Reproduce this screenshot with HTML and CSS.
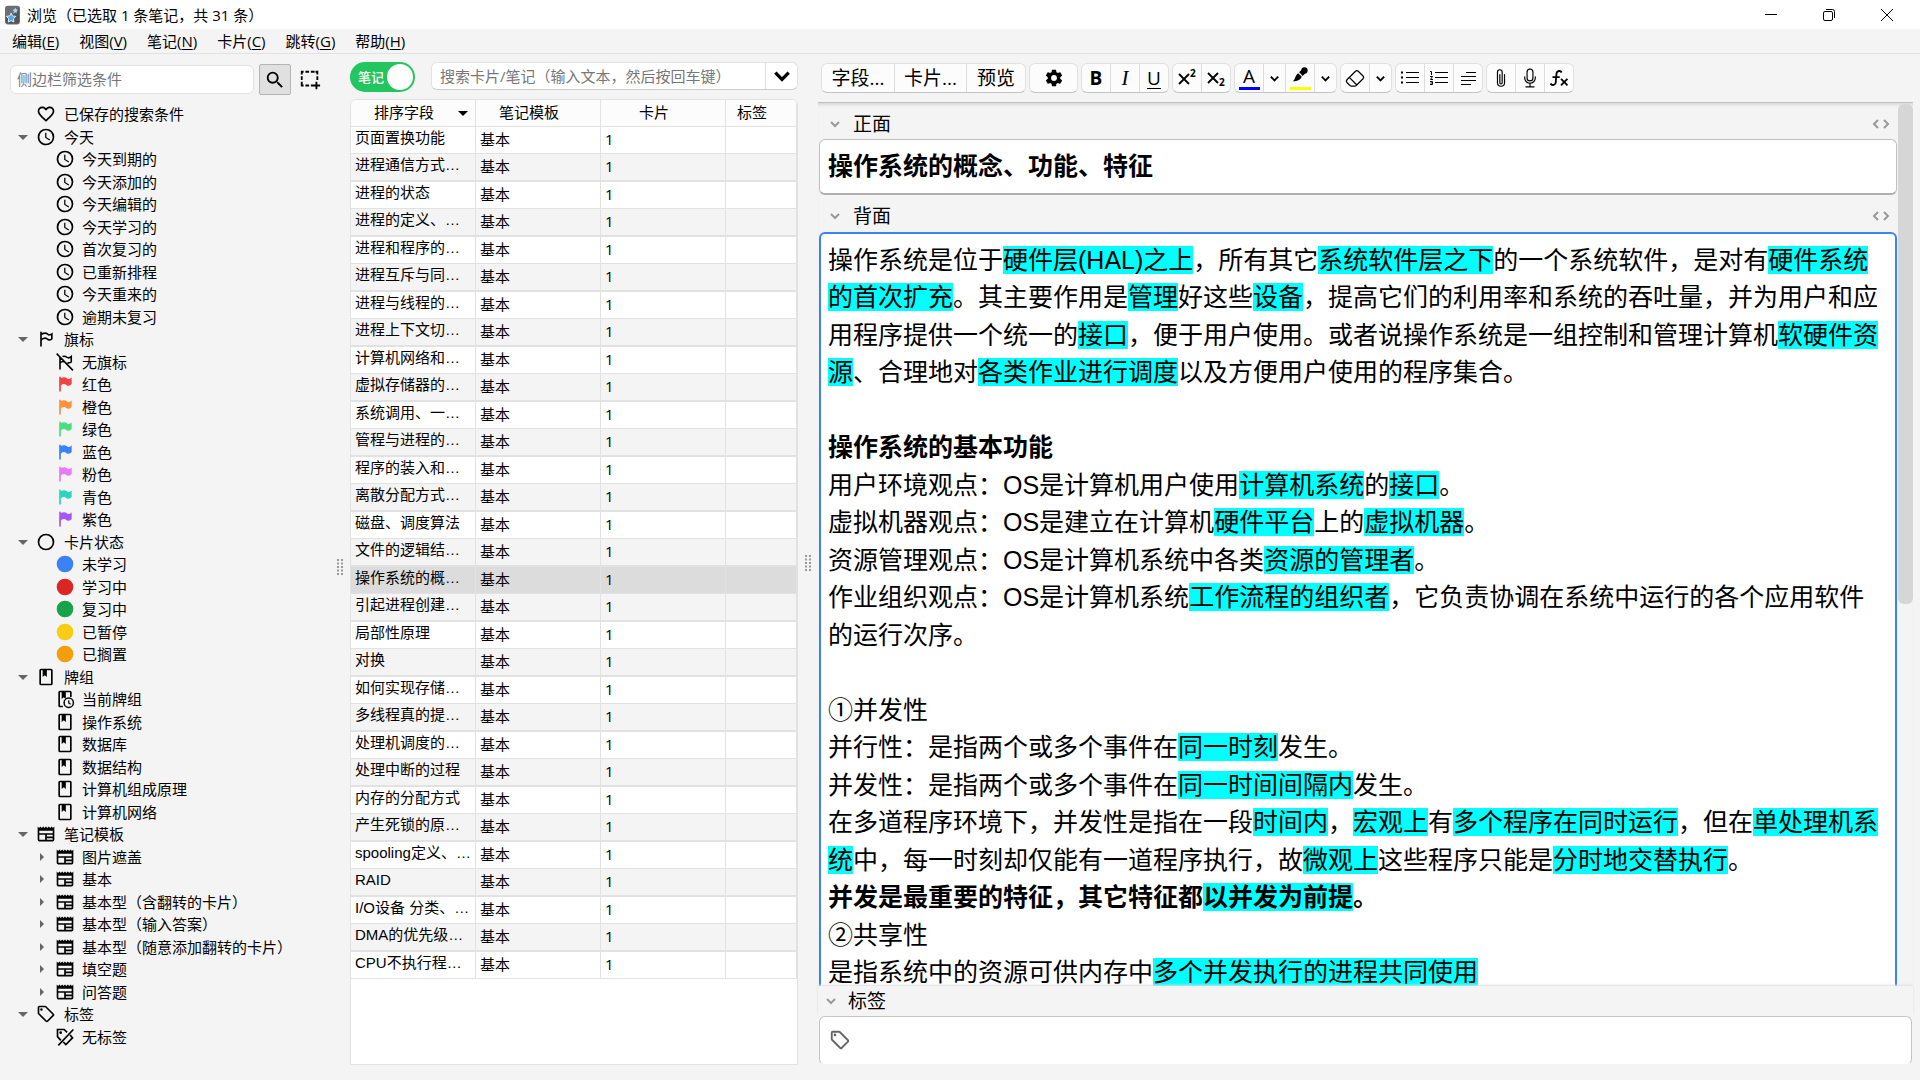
FILE: index.html
```html
<!DOCTYPE html>
<html lang="zh-CN">
<head>
<meta charset="utf-8">
<title>浏览</title>
<link rel="stylesheet" href="styles.css">
</head>
<body>
<svg class="sprite" aria-hidden="true">
  <symbol id="search" viewBox="0 0 24 24"><path d="M9.5,3A6.5,6.5 0 0,1 16,9.5C16,11.11 15.41,12.59 14.44,13.73L14.71,14H15.5L20.5,19L19,20.5L14,15.5V14.71L13.73,14.44C12.59,15.41 11.11,16 9.5,16A6.5,6.5 0 0,1 3,9.5A6.5,6.5 0 0,1 9.5,3M9.5,5C7,5 5,7 5,9.5C5,12 7,14 9.5,14C12,14 14,12 14,9.5C14,7 12,5 9.5,5Z"/></symbol>
  <symbol id="select" viewBox="0 0 24 24"><path d="M2,2H5V4H4V6H2V2M7,2H11V4H7V2M13,2H17V4H13V2M18,2H21V6H19V4H18V2M2,8H4V12H2V8M19,8H21V12H19V8M2,14H4V17H5V19H2V14M7,17H11V19H7V17M13,17H15V19H13V17M18,14H20V17H23V19H20V22H18V19H15V17H18V14Z"/></symbol>
  <symbol id="heart" viewBox="0 0 24 24"><path d="M12.1,18.55L12,18.65L11.89,18.55C7.14,14.24 4,11.39 4,8.5C4,6.5 5.5,5 7.5,5C9.04,5 10.54,6 11.07,7.36H12.93C13.46,6 14.96,5 16.5,5C18.5,5 20,6.5 20,8.5C20,11.39 16.86,14.24 12.1,18.55M16.5,3C14.76,3 13.09,3.81 12,5.08C10.91,3.81 9.24,3 7.5,3C4.42,3 2,5.41 2,8.5C2,12.27 5.4,15.36 10.55,20.03L12,21.35L13.45,20.03C18.6,15.36 22,12.27 22,8.5C22,5.41 19.58,3 16.5,3Z"/></symbol>
  <symbol id="clock" viewBox="0 0 24 24"><path d="M12,20A8,8 0 0,0 20,12A8,8 0 0,0 12,4A8,8 0 0,0 4,12A8,8 0 0,0 12,20M12,2A10,10 0 0,1 22,12A10,10 0 0,1 12,22C6.47,22 2,17.5 2,12A10,10 0 0,1 12,2M12.5,7V12.25L17,14.92L16.25,16.15L11,13V7H12.5Z"/></symbol>
  <symbol id="flag" viewBox="0 0 24 24"><path d="M6,3A1,1 0 0,1 7,4V4.88C8.06,4.44 9.5,4 11,4C14,4 14,6 16,6C19,6 20,4 20,4V12C20,12 19,14 16,14C13,14 13,12 11,12C8,12 7,14 7,14V21H5V4A1,1 0 0,1 6,3Z"/></symbol>
  <symbol id="flag-line" viewBox="0 0 24 24"><path d="M6,3A1,1 0 0,1 7,4V4.88C8.06,4.44 9.5,4 11,4C14,4 14,6 16,6C19,6 20,4 20,4V12C20,12 19,14 16,14C13,14 13,12 11,12C8,12 7,14 7,14V21H5V4A1,1 0 0,1 6,3M7,7.25V11.5C7,11.5 9,10 11,10C13,10 14,12 16,12C18,12 18,11 18,11V7.5C18,7.5 17,8 16,8C14,8 13,6 11,6C9,6 7,7.25 7,7.25Z"/></symbol>
  <symbol id="flag-off" viewBox="0 0 24 24"><path d="M6,6V21M6,13C8,11 10,11 12,12M9,5.500C13,4 14,7 16,7C18,7 19,6 19.500,5.500V12C18,13.500 16,13 15,13M2,2L21.500,22" fill="none" stroke="currentColor" stroke-width="1.900"/></symbol>
  <symbol id="ring" viewBox="0 0 24 24"><circle cx="12" cy="12" r="9" fill="none" stroke="currentColor" stroke-width="2"/></symbol>
  <symbol id="dot" viewBox="0 0 24 24"><circle cx="12" cy="12" r="10"/></symbol>
  <symbol id="book" viewBox="0 0 24 24"><path d="M18,2A2,2 0 0,1 20,4V20A2,2 0 0,1 18,22H6A2,2 0 0,1 4,20V4A2,2 0 0,1 6,2H18M18,4H13V12L10.500,9.750L8,12V4H6V20H18V4Z"/></symbol>
  <symbol id="book-clock" viewBox="0 0 24 24"><path d="M18,2A2,2 0 0,1 20,4V9.500H18V4H13V12L10.500,9.750L8,12V4H6V20H9.500V22H6A2,2 0 0,1 4,20V4A2,2 0 0,1 6,2H18Z"/><circle cx="16.500" cy="16.500" r="5.600" fill="none" stroke="currentColor" stroke-width="1.800"/><path d="M16.500,13.500V16.800L18.800,18.200" fill="none" stroke="currentColor" stroke-width="1.500"/></symbol>
  <symbol id="news" viewBox="0 0 24 24"><path d="M20,11H4V8H20M20,15H13V13H20M20,19H13V17H20M11,19H4V13H11M20.330,4.670L18.670,3L17,4.670L15.330,3L13.670,4.670L12,3L10.330,4.670L8.670,3L7,4.670L5.330,3L3.670,4.670L2,3V19A2,2 0 0,0 4,21H20A2,2 0 0,0 22,19V3L20.330,4.670Z"/></symbol>
  <symbol id="tag" viewBox="0 0 24 24"><path d="M21.410,11.580L12.410,2.580C12.040,2.210 11.530,2 11,2H4A2,2 0 0,0 2,4V11C2,11.530 2.210,12.040 2.590,12.410L11.590,21.410C11.960,21.780 12.470,22 13,22C13.530,22 14.040,21.790 14.410,21.410L21.410,14.410C21.790,14.040 22,13.530 22,13C22,12.470 21.790,11.960 21.410,11.580M13,20L4,11V4H11L20,13M6.500,5A1.500,1.500 0 0,1 8,6.500A1.500,1.500 0 0,1 6.500,8A1.500,1.500 0 0,1 5,6.500A1.500,1.500 0 0,1 6.500,5Z"/></symbol>
  <symbol id="tag-off" viewBox="0 0 24 24"><path d="M7,16L3,11.500V3H11L14.500,6.500M18,9.500L21,13L13,21L10,18M22,3L4,22" fill="none" stroke="currentColor" stroke-width="2"/><circle cx="6.800" cy="6.800" r="1.600"/></symbol>
  <symbol id="cog" viewBox="0 0 24 24"><path d="M12,15.5A3.5,3.5 0 0,1 8.5,12A3.5,3.5 0 0,1 12,8.5A3.5,3.5 0 0,1 15.5,12A3.5,3.5 0 0,1 12,15.5M19.43,12.97C19.47,12.65 19.5,12.33 19.5,12C19.5,11.67 19.47,11.34 19.43,11L21.54,9.37C21.73,9.22 21.78,8.95 21.66,8.73L19.66,5.27C19.54,5.05 19.27,4.96 19.05,5.05L16.56,6.05C16.04,5.66 15.5,5.32 14.87,5.07L14.5,2.42C14.46,2.18 14.25,2 14,2H10C9.75,2 9.54,2.18 9.5,2.42L9.13,5.07C8.5,5.32 7.96,5.66 7.44,6.05L4.95,5.05C4.73,4.96 4.46,5.05 4.34,5.27L2.34,8.73C2.21,8.95 2.27,9.22 2.46,9.37L4.57,11C4.53,11.34 4.5,11.67 4.5,12C4.5,12.33 4.53,12.65 4.57,12.97L2.46,14.63C2.27,14.78 2.21,15.05 2.34,15.27L4.34,18.73C4.46,18.95 4.73,19.03 4.95,18.95L7.44,17.94C7.96,18.34 8.5,18.68 9.13,18.93L9.5,21.58C9.54,21.82 9.75,22 10,22H14C14.25,22 14.46,21.82 14.5,21.58L14.87,18.93C15.5,18.67 16.04,18.34 16.56,17.94L19.05,18.95C19.27,19.03 19.54,18.95 19.66,18.73L21.66,15.27C21.78,15.05 21.73,14.78 21.54,14.63L19.43,12.97Z"/></symbol>
  <symbol id="chevron" viewBox="0 0 12 12"><path d="M2,4L6,8L10,4" fill="none" stroke="currentColor" stroke-width="2"/></symbol>
  <symbol id="code" viewBox="0 0 18 12"><path d="M6,2L2,6L6,10M12,2L16,6L12,10" fill="none" stroke="currentColor" stroke-width="2"/></symbol>
  <symbol id="open" viewBox="0 0 10 10"><path d="M0,3H10L5,8Z"/></symbol>
  <symbol id="closed" viewBox="0 0 10 10"><path d="M3,1V9L7,5Z"/></symbol>
  <symbol id="grip" viewBox="0 0 6 16"><path d="M0,0h2v2h-2zM4,0h2v2h-2zM0,3.500h2v2h-2zM4,3.500h2v2h-2zM0,7h2v2h-2zM4,7h2v2h-2zM0,10.500h2v2h-2zM4,10.500h2v2h-2zM0,14h2v2h-2zM4,14h2v2h-2z"/></symbol>
</svg>

<header class="titlebar">
  <svg class="app-icon" viewBox="0 0 16 20"><rect x="0" y="0" width="16" height="20" rx="3" fill="#6f6f6f"/><path d="M1,11C7,12 12,8 15,2V17Q15,19 13,19H3Q1,19 1,17Z" fill="#555"/><path d="M6.500,8L8,11L11.500,11.500L9,14L9.500,17.500L6.500,16L3.500,17.500L4,14L1.500,11.500L5,11Z" fill="#4aa8ee" stroke="#e4f3ff" stroke-width="1"/><path d="M11,2L12,4L14,4.500L12.500,6L12.500,8L11,7L9,8L9.500,6L8,4.500L10,4Z" fill="#a9d6f7"/></svg>
  <h1 class="title">浏览（已选取 1 条笔记，共 31 条）</h1>
  <div class="window-buttons">
    <button aria-label="最小化"><svg viewBox="0 0 14 14"><path d="M1,6.500H13"/></svg></button>
    <button aria-label="还原"><svg viewBox="0 0 14 14"><rect x="1.500" y="3.500" width="9" height="9" rx="1.500"/><path d="M4,1.500H10.500Q12.500,1.500 12.500,3.500V10"/></svg></button>
    <button aria-label="关闭"><svg viewBox="0 0 14 14"><path d="M1,1L13,13M13,1L1,13"/></svg></button>
  </div>
</header>

<nav class="menubar">
  <button>编辑(<u>E</u>)</button>
  <button>视图(<u>V</u>)</button>
  <button>笔记(<u>N</u>)</button>
  <button>卡片(<u>C</u>)</button>
  <button>跳转(<u>G</u>)</button>
  <button>帮助(<u>H</u>)</button>
</nav>

<main class="browser">
  <aside class="sidebar">
    <div class="sidebar-tools">
      <input class="filter" type="text" placeholder="侧边栏筛选条件" aria-label="侧边栏筛选条件">
      <button class="tool active" aria-label="搜索"><svg><use href="#search"/></svg></button>
      <button class="tool" aria-label="选择"><svg><use href="#select"/></svg></button>
    </div>
    <ul class="tree">
      <li><i class="arrow"></i><svg><use href="#heart"/></svg>已保存的搜索条件</li>
      <li><svg class="arrow"><use href="#open"/></svg><svg><use href="#clock"/></svg>今天</li>
      <li class="child"><i class="arrow"></i><svg><use href="#clock"/></svg>今天到期的</li>
      <li class="child"><i class="arrow"></i><svg><use href="#clock"/></svg>今天添加的</li>
      <li class="child"><i class="arrow"></i><svg><use href="#clock"/></svg>今天编辑的</li>
      <li class="child"><i class="arrow"></i><svg><use href="#clock"/></svg>今天学习的</li>
      <li class="child"><i class="arrow"></i><svg><use href="#clock"/></svg>首次复习的</li>
      <li class="child"><i class="arrow"></i><svg><use href="#clock"/></svg>已重新排程</li>
      <li class="child"><i class="arrow"></i><svg><use href="#clock"/></svg>今天重来的</li>
      <li class="child"><i class="arrow"></i><svg><use href="#clock"/></svg>逾期未复习</li>
      <li><svg class="arrow"><use href="#open"/></svg><svg><use href="#flag-line"/></svg>旗标</li>
      <li class="child"><i class="arrow"></i><svg><use href="#flag-off"/></svg>无旗标</li>
      <li class="child"><i class="arrow"></i><svg class="red"><use href="#flag"/></svg>红色</li>
      <li class="child"><i class="arrow"></i><svg class="orange"><use href="#flag"/></svg>橙色</li>
      <li class="child"><i class="arrow"></i><svg class="green"><use href="#flag"/></svg>绿色</li>
      <li class="child"><i class="arrow"></i><svg class="blue"><use href="#flag"/></svg>蓝色</li>
      <li class="child"><i class="arrow"></i><svg class="pink"><use href="#flag"/></svg>粉色</li>
      <li class="child"><i class="arrow"></i><svg class="teal"><use href="#flag"/></svg>青色</li>
      <li class="child"><i class="arrow"></i><svg class="purple"><use href="#flag"/></svg>紫色</li>
      <li><svg class="arrow"><use href="#open"/></svg><svg><use href="#ring"/></svg>卡片状态</li>
      <li class="child"><i class="arrow"></i><svg class="blue"><use href="#dot"/></svg>未学习</li>
      <li class="child"><i class="arrow"></i><svg class="learn"><use href="#dot"/></svg>学习中</li>
      <li class="child"><i class="arrow"></i><svg class="review"><use href="#dot"/></svg>复习中</li>
      <li class="child"><i class="arrow"></i><svg class="suspended"><use href="#dot"/></svg>已暂停</li>
      <li class="child"><i class="arrow"></i><svg class="buried"><use href="#dot"/></svg>已搁置</li>
      <li><svg class="arrow"><use href="#open"/></svg><svg><use href="#book"/></svg>牌组</li>
      <li class="child"><i class="arrow"></i><svg><use href="#book-clock"/></svg>当前牌组</li>
      <li class="child"><i class="arrow"></i><svg><use href="#book"/></svg>操作系统</li>
      <li class="child"><i class="arrow"></i><svg><use href="#book"/></svg>数据库</li>
      <li class="child"><i class="arrow"></i><svg><use href="#book"/></svg>数据结构</li>
      <li class="child"><i class="arrow"></i><svg><use href="#book"/></svg>计算机组成原理</li>
      <li class="child"><i class="arrow"></i><svg><use href="#book"/></svg>计算机网络</li>
      <li><svg class="arrow"><use href="#open"/></svg><svg><use href="#news"/></svg>笔记模板</li>
      <li class="child"><svg class="arrow"><use href="#closed"/></svg><svg><use href="#news"/></svg>图片遮盖</li>
      <li class="child"><svg class="arrow"><use href="#closed"/></svg><svg><use href="#news"/></svg>基本</li>
      <li class="child"><svg class="arrow"><use href="#closed"/></svg><svg><use href="#news"/></svg>基本型（含翻转的卡片）</li>
      <li class="child"><svg class="arrow"><use href="#closed"/></svg><svg><use href="#news"/></svg>基本型（输入答案）</li>
      <li class="child"><svg class="arrow"><use href="#closed"/></svg><svg><use href="#news"/></svg>基本型（随意添加翻转的卡片）</li>
      <li class="child"><svg class="arrow"><use href="#closed"/></svg><svg><use href="#news"/></svg>填空题</li>
      <li class="child"><svg class="arrow"><use href="#closed"/></svg><svg><use href="#news"/></svg>问答题</li>
      <li><svg class="arrow"><use href="#open"/></svg><svg><use href="#tag"/></svg>标签</li>
      <li class="child"><i class="arrow"></i><svg><use href="#tag-off"/></svg>无标签</li>
    </ul>
  </aside>

  <div class="splitter"><svg><use href="#grip"/></svg></div>

  <section class="list">
    <div class="list-tools">
      <label class="switch"><input type="checkbox" checked><span>笔记</span></label>
      <div class="search">
        <input type="text" placeholder="搜索卡片/笔记（输入文本，然后按回车键）" aria-label="搜索卡片/笔记">
        <button aria-label="搜索历史"><svg><use href="#chevron"/></svg></button>
      </div>
    </div>
    <div class="table-box">
      <table>
        <colgroup><col class="wide"><col class="wide"><col class="wide"><col></colgroup>
        <thead><tr><th class="sorted">排序字段<svg><use href="#open"/></svg></th><th>笔记模板</th><th>卡片</th><th>标签</th></tr></thead>
        <tbody>
          <tr><td>页面置换功能</td><td>基本</td><td>1</td><td></td></tr>
          <tr><td>进程通信方式…</td><td>基本</td><td>1</td><td></td></tr>
          <tr><td>进程的状态</td><td>基本</td><td>1</td><td></td></tr>
          <tr><td>进程的定义、…</td><td>基本</td><td>1</td><td></td></tr>
          <tr><td>进程和程序的…</td><td>基本</td><td>1</td><td></td></tr>
          <tr><td>进程互斥与同…</td><td>基本</td><td>1</td><td></td></tr>
          <tr><td>进程与线程的…</td><td>基本</td><td>1</td><td></td></tr>
          <tr><td>进程上下文切…</td><td>基本</td><td>1</td><td></td></tr>
          <tr><td>计算机网络和…</td><td>基本</td><td>1</td><td></td></tr>
          <tr><td>虚拟存储器的…</td><td>基本</td><td>1</td><td></td></tr>
          <tr><td>系统调用、一…</td><td>基本</td><td>1</td><td></td></tr>
          <tr><td>管程与进程的…</td><td>基本</td><td>1</td><td></td></tr>
          <tr><td>程序的装入和…</td><td>基本</td><td>1</td><td></td></tr>
          <tr><td>离散分配方式…</td><td>基本</td><td>1</td><td></td></tr>
          <tr><td>磁盘、调度算法</td><td>基本</td><td>1</td><td></td></tr>
          <tr><td>文件的逻辑结…</td><td>基本</td><td>1</td><td></td></tr>
          <tr class="selected"><td>操作系统的概…</td><td>基本</td><td>1</td><td></td></tr>
          <tr><td>引起进程创建…</td><td>基本</td><td>1</td><td></td></tr>
          <tr><td>局部性原理</td><td>基本</td><td>1</td><td></td></tr>
          <tr><td>对换</td><td>基本</td><td>1</td><td></td></tr>
          <tr><td>如何实现存储…</td><td>基本</td><td>1</td><td></td></tr>
          <tr><td>多线程真的提…</td><td>基本</td><td>1</td><td></td></tr>
          <tr><td>处理机调度的…</td><td>基本</td><td>1</td><td></td></tr>
          <tr><td>处理中断的过程</td><td>基本</td><td>1</td><td></td></tr>
          <tr><td>内存的分配方式</td><td>基本</td><td>1</td><td></td></tr>
          <tr><td>产生死锁的原…</td><td>基本</td><td>1</td><td></td></tr>
          <tr><td>spooling定义、…</td><td>基本</td><td>1</td><td></td></tr>
          <tr><td>RAID</td><td>基本</td><td>1</td><td></td></tr>
          <tr><td>I/O设备 分类、…</td><td>基本</td><td>1</td><td></td></tr>
          <tr><td>DMA的优先级…</td><td>基本</td><td>1</td><td></td></tr>
          <tr><td>CPU不执行程…</td><td>基本</td><td>1</td><td></td></tr>
        </tbody>
      </table>
    </div>
  </section>

  <div class="splitter second"><svg><use href="#grip"/></svg></div>

  <section class="editor">
    <div class="toolbar">
      <div class="group text"><button>字段...</button><button>卡片...</button><button>预览</button></div>
      <div class="group single"><button aria-label="选项"><svg><use href="#cog"/></svg></button></div>
      <div class="group">
        <button class="bold">B</button><button class="italic">I</button><button class="underline">U</button>
      </div>
      <div class="group">
        <button aria-label="上标"><svg viewBox="0 0 20 20"><path class="line bolder" d="M2,6L12,16M12,6L2,16"/><text x="13" y="9">2</text></svg></button>
        <button aria-label="下标"><svg viewBox="0 0 20 20"><path class="line bolder" d="M2,5L12,15M12,5L2,15"/><text x="13" y="18">2</text></svg></button>
      </div>
      <div class="group">
        <button class="swatch text-color">A</button>
        <button class="drop" aria-label="文字颜色"><svg><use href="#chevron"/></svg></button>
        <button class="swatch mark-color" aria-label="突出显示"><svg viewBox="0 0 20 20"><path d="M2,17C5,15 4,11 8,8L12,12C10,16 7,17 2,17ZM9,7L12,4L16,8L13,11Z"/><circle cx="15" cy="5" r="3.500"/></svg></button>
        <button class="drop" aria-label="突出显示颜色"><svg><use href="#chevron"/></svg></button>
      </div>
      <div class="group">
        <button aria-label="清除格式"><svg viewBox="0 0 16 16"><path d="M8.086 2.207a2 2 0 0 1 2.828 0l3.879 3.879a2 2 0 0 1 0 2.828l-5.5 5.5A2 2 0 0 1 7.879 15H5.12a2 2 0 0 1-1.414-.586l-2.5-2.5a2 2 0 0 1 0-2.828l6.879-6.879zm2.121.707a1 1 0 0 0-1.414 0L4.16 7.547l5.293 5.293 4.633-4.633a1 1 0 0 0 0-1.414l-3.879-3.879zM8.746 13.547 3.453 8.254 1.914 9.793a1 1 0 0 0 0 1.414l2.5 2.5a1 1 0 0 0 .707.293H7.88a1 1 0 0 0 .707-.293l.16-.16z"/></svg></button>
        <button class="drop" aria-label="清除选项"><svg><use href="#chevron"/></svg></button>
      </div>
      <div class="group">
        <button aria-label="无序列表"><svg viewBox="0 0 20 20"><path class="line" d="M6,4.500H19M6,9.500H19M6,14.500H19"/><path d="M1,3.500h2v2h-2zM1,8.500h2v2h-2zM1,13.500h2v2h-2z"/></svg></button>
        <button aria-label="有序列表"><svg viewBox="0 0 20 20"><path class="line" d="M6,4.500H19M6,9.500H19M6,14.500H19"/><path class="line thin" d="M1,3.500H2.500V7M1,8.500H3.500L1.500,11.500H4M1,13.500H3.500V16.500H1M1.500,15H3.500"/></svg></button>
        <button aria-label="对齐"><svg viewBox="0 0 20 20"><path class="line" d="M8,4.500H18M3,8.500H18M3,12.500H18M3,16.500H13"/></svg></button>
      </div>
      <div class="group">
        <button aria-label="附件"><svg viewBox="-.5 -.5 17 17"><path d="M4.5 3a2.5 2.5 0 0 1 5 0v9a1.5 1.5 0 0 1-3 0V5a.5.5 0 0 1 1 0v7a.5.5 0 0 0 1 0V3a1.5 1.5 0 1 0-3 0v9a2.5 2.5 0 0 0 5 0V5a.5.5 0 0 1 1 0v7a3.5 3.5 0 1 1-7 0V3z"/></svg></button>
        <button aria-label="录音"><svg viewBox="-.5 -.5 17 17"><path d="M3.5 6.5A.5.5 0 0 1 4 7v1a4 4 0 0 0 8 0V7a.5.5 0 0 1 1 0v1a5 5 0 0 1-4.5 4.975V15h3a.5.5 0 0 1 0 1h-7a.5.5 0 0 1 0-1h3v-2.025A5 5 0 0 1 3 8V7a.5.5 0 0 1 .5-.5z"/><path d="M10 8a2 2 0 1 1-4 0V3a2 2 0 1 1 4 0v5zM8 0a3 3 0 0 0-3 3v5a3 3 0 0 0 6 0V3a3 3 0 0 0-3-3z"/></svg></button>
        <button aria-label="公式"><svg viewBox="1 1 22 22"><path d="M12.42,5.29C11.32,5.19 10.35,6 10.25,7.11L10,10H12.82V12H9.82L9.38,17.07C9.18,19.27 7.24,20.9 5.04,20.7C3.79,20.59 2.66,19.9 2,18.83L3.5,17.33C3.83,18.38 4.96,18.97 6,18.63C6.78,18.39 7.33,17.7 7.4,16.89L7.82,12H4.82V10H8L8.27,6.93C8.46,4.73 10.39,3.1 12.6,3.28C13.86,3.39 15,4.09 15.66,5.17L14.16,6.67C13.91,5.9 13.23,5.36 12.42,5.29M22,13.65L20.59,12.24L17.76,15.07L14.93,12.24L13.5,13.65L16.35,16.5L13.5,19.33L14.93,20.74L17.76,17.9L20.59,20.74L22,19.33L19.17,16.5L22,13.65Z"/></svg></button>
      </div>
    </div>

    <div class="scroller">
      <div class="fields">
        <div class="field-head"><svg class="fold"><use href="#chevron"/></svg><span>正面</span><svg class="code"><use href="#code"/></svg></div>
        <div class="field" contenteditable="true" role="textbox" aria-label="正面"><b>操作系统的概念、功能、特征</b></div>
        <div class="field-head"><svg class="fold"><use href="#chevron"/></svg><span>背面</span><svg class="code"><use href="#code"/></svg></div>
        <div class="field focused" contenteditable="true" role="textbox" aria-label="背面">
          <p>操作系统是位于<mark>硬件层(HAL)之上</mark>，所有其它<mark>系统软件层之下</mark>的一个系统软件，是对有<mark>硬件系统的首次扩充</mark>。其主要作用是<mark>管理</mark>好这些<mark>设备</mark>，提高它们的利用率和系统的吞吐量，并为用户和应用程序提供一个统一的<mark>接口</mark>，便于用户使用。或者说操作系统是一组控制和管理计算机<mark>软硬件资源</mark>、合理地对<mark>各类作业进行调度</mark>以及方便用户使用的程序集合。</p>
          <p><br></p>
          <p><b>操作系统的基本功能</b></p>
          <p>用户环境观点：OS是计算机用户使用<mark>计算机系统</mark>的<mark>接口</mark>。</p>
          <p>虚拟机器观点：OS是建立在计算机<mark>硬件平台</mark>上的<mark>虚拟机器</mark>。</p>
          <p>资源管理观点：OS是计算机系统中各类<mark>资源的管理者</mark>。</p>
          <p>作业组织观点：OS是计算机系统<mark>工作流程的组织者</mark>，它负责协调在系统中运行的各个应用软件的运行次序。</p>
          <p><br></p>
          <p>①并发性</p>
          <p>并行性：是指两个或多个事件在<mark>同一时刻</mark>发生。</p>
          <p>并发性：是指两个或多个事件在<mark>同一时间间隔内</mark>发生。</p>
          <p>在多道程序环境下，并发性是指在一段<mark>时间内</mark>，<mark>宏观上</mark>有<mark>多个程序在同时运行</mark>，但在<mark>单处理机系统</mark>中，每一时刻却仅能有一道程序执行，故<mark>微观上</mark>这些程序只能是<mark>分时地交替执行</mark>。</p>
          <p><b>并发是最重要的特征，其它特征都<mark>以并发为前提</mark>。</b></p>
          <p>②共享性</p>
          <p>是指系统中的资源可供内存中<mark>多个并发执行的进程共同使用</mark></p>
        </div>
      </div>
      <div class="scrollbar"><div class="thumb"></div></div>
    </div>

    <div class="tags-head"><svg class="fold"><use href="#chevron"/></svg><label for="tags">标签</label></div>
    <div class="tags-box"><svg><use href="#tag"/></svg><input id="tags" type="text"></div>
  </section>
</main>
</body>
</html>
```
FILE: styles.css
```css
* { box-sizing: border-box; }

body {
  margin: 0;
  height: 100vh;
  display: flex;
  flex-direction: column;
  overflow: hidden;
  background: #f4f4f4;
  color: #000;
  font: 15px/20px "Open Sans", "Noto Sans CJK SC", sans-serif;
  text-spacing-trim: space-all;
}

button, input { font: inherit; color: inherit; margin: 0; padding: 0; border: 0; background: none; outline: 0; }
svg { display: block; flex: none; fill: currentColor; }
.sprite { position: absolute; width: 0; height: 0; }

/* window chrome */
.titlebar { display: flex; align-items: center; height: 29px; background: #fff; padding-left: 5px; }
.app-icon { width: 15px; height: 20px; }
.title { flex: 1; margin: 0 0 0 7px; font-size: 15px; font-weight: 400; }
.window-buttons { display: flex; padding-right: 4px; }
.window-buttons button { width: 58px; height: 29px; display: flex; align-items: center; justify-content: center; }
.window-buttons svg { width: 14px; height: 14px; fill: none; stroke: #000; }

.menubar { display: flex; gap: 20px; height: 25px; padding: 0 12px; border-bottom: 1px solid #e2e2e2; }
.menubar button { line-height: 24px; }
.menubar u { text-underline-offset: 2px; }

.browser { flex: 1; display: flex; min-height: 0; }

.splitter { flex: none; width: 12px; display: flex; align-items: center; justify-content: center; }
.splitter.second { margin-bottom: 8px; }
.splitter svg { width: 6px; height: 16px; fill: #999; }

/* sidebar */
.sidebar { width: 334px; flex: none; padding: 10px 0 0 10px; }
.sidebar-tools { display: flex; align-items: center; height: 31px; gap: 5px; margin-bottom: 8px; }
.filter { width: 244px; height: 29px; padding: 0 6px 2px; background: #fff; border: 1px solid #e2e2e2; border-radius: 6px; }
input::placeholder { color: #777; opacity: 1; }
.tool { width: 32px; height: 31px; display: flex; align-items: center; justify-content: center; border: 1px solid transparent; border-radius: 2px; }
.tool.active { background: #e0e0e0; border-color: #b4b4b4; }
.tool + .tool { width: 28px; }
.tool svg { width: 22px; height: 22px; }

.tree { list-style: none; margin: 0; padding: 0 0 0 8px; }
.tree li { display: flex; align-items: center; height: 22px; line-height: 22px; white-space: nowrap; }
.tree li:nth-child(even) { height: 23px; }
.tree .child { padding-left: 19px; }
.tree svg { width: 20px; height: 20px; margin-right: 8px; }
.tree .child svg { margin-right: 7px; }
.tree .arrow, .tree .child .arrow { width: 10px; height: 10px; margin-right: 8px; color: #666; }
.red { color: #ef4444; }
.orange { color: #fb923c; }
.green { color: #4ade80; }
.blue { color: #3b82f6; }
.pink { color: #e879f9; }
.teal { color: #2dd4bf; }
.purple { color: #a855f7; }
.learn { color: #dc2626; }
.review { color: #16a34a; }
.suspended { color: #facc15; }
.buried { color: #f59e0b; }

/* note list */
.list { width: 448px; flex: none; margin: 0 4px; padding: 8px 0 15px; display: flex; flex-direction: column; }
.list-tools { display: flex; gap: 16px; height: 30px; margin-bottom: 7px; }
.switch { width: 65px; height: 30px; padding: 0 2px 0 8px; display: flex; align-items: center; justify-content: space-between; border-radius: 15px; background: #22c55e; color: #fff; font-size: 13px; font-weight: 500; }
.switch::after { content: ""; width: 26px; height: 26px; border-radius: 50%; background: #fff; }
.switch input { position: absolute; opacity: 0; }
.search { flex: 1; display: flex; height: 28px; background: #fff; border: 1px solid #e2e2e2; border-bottom-color: #ccc; border-radius: 6px; overflow: hidden; }
.search input { flex: 1; min-width: 0; padding-left: 8px; }
.search button { width: 32px; border-left: 1px solid #ddd; display: flex; align-items: center; justify-content: center; }
.search svg { width: 20px; height: 20px; }

.table-box { flex: 1; min-height: 0; overflow: hidden; background: #fff; border: 1px solid #e2e2e2; border-radius: 6px 6px 0 0; }
table { width: 100%; table-layout: fixed; border-spacing: 0; }
.wide { width: 125px; }
th, td { padding: 0; border: 0 solid #e2e2e2; border-width: 0 1px 1px 0; white-space: nowrap; overflow: hidden; line-height: 22px; }
th { height: 27px; padding: 0 18px 2px 0; background: #fcfcfc; font-weight: 400; position: relative; }
.sorted svg { position: absolute; right: 7px; top: 8px; width: 10px; height: 10px; }
td { height: 27px; padding: 0 4px 3px; }
td:first-child { padding-bottom: 4px; font-family: "Liberation Sans", "Noto Sans CJK SC", sans-serif; }
tr:nth-child(even) td { height: 28px; border-bottom-width: 2px; background: #f4f4f4; }
.selected td { background: #dcdcdc; }

/* editor */
.editor { flex: 1; min-width: 0; margin-left: 4px; padding: 0 7px 15px 0; display: flex; flex-direction: column; }
.toolbar { display: flex; gap: 3px; height: 48px; padding: 9px 0 0 3px; }
.group { display: flex; height: 30px; border: 1px solid #e0e0e0; border-bottom-color: #c4c4c4; border-radius: 6px; background: #fcfcfc; }
.group button { width: 28px; display: flex; align-items: center; justify-content: center; font-size: 19px; }
.group button + button { width: 29px; border-left: 1px solid #dcdcdc; }
.group svg { width: 20px; height: 20px; overflow: visible; }
.group.text button { width: 72px; }
.group.text button:last-child { width: 59px; }
.group.single button { width: 47px; }
.group .bold { font-weight: 700; }
.group .italic { font-family: "Liberation Serif", serif; font-style: italic; font-size: 21px; }
.group .underline { text-decoration: underline; text-underline-offset: 3px; }
.group .swatch { flex-direction: column; height: 28px; line-height: 20px; }
.group .swatch::after { content: ""; width: 21px; height: 3px; margin-top: 1px; }
.group .swatch svg { width: 18px; height: 18px; margin-bottom: 2px; }
.group .text-color::after { background: #00f; }
.group .mark-color::after { background: #ff0; }
.group .drop, .group button + .drop { width: 22px; }
.group .drop svg { width: 11px; height: 11px; }
.line { fill: none; stroke: currentColor; stroke-width: 1.2; }
.line.bolder { stroke-width: 1.8; }
.line.thin { stroke-width: 1; }
.group text { font-size: 10px; font-weight: 700; }

.scroller { flex: 1; min-height: 0; display: flex; border-top: 1px solid #c0c0c0; box-shadow: inset 0 4px 4px -3px #ccc; overflow: hidden; }
.fields { flex: 1; min-width: 0; padding: 0 1px; }
.field-head { display: flex; align-items: center; height: 36px; padding: 5px 7px 0 10px; font-size: 19px; }
.fold { width: 12px; height: 12px; color: #999; margin-right: 12px; }
.code { width: 18px; height: 12px; margin-left: auto; color: #999; }
.field { padding: 8px 8px 7px; border: 1px solid #c0c0c0; border-bottom: 2px solid #b0b0b0; border-radius: 6px; margin-bottom: 1px; background: #fff; font: 25px/1.5 "Liberation Sans", "Noto Sans CJK SC", sans-serif; outline: 0; }
.field.focused { border: 2px solid #3b82f6; padding: 8px 7px; }
.field p { margin: 0; }
mark { background: #0ff; color: inherit; }
.scrollbar { width: 15px; padding-top: 1px; }
.thumb { height: 500px; border-radius: 6px; background: #d6d6d6; }

.tags-head { display: flex; align-items: center; height: 30px; padding-left: 7px; font-size: 19px; box-shadow: 0 -1px 2px #ddd; position: relative; background: #f4f4f4; }
.tags-head .fold { margin-right: 11px; }
.tags-box { display: flex; align-items: center; height: 49px; margin: 0 1px; padding: 0 9px 2px; border: 1px solid #c4c4c4; border-bottom-color: #f4f4f4; border-radius: 6px; background: #fff; }
.tags-box svg { width: 22px; height: 22px; color: #666; }
.tags-box input { flex: 1; padding-left: 6px; }
```
